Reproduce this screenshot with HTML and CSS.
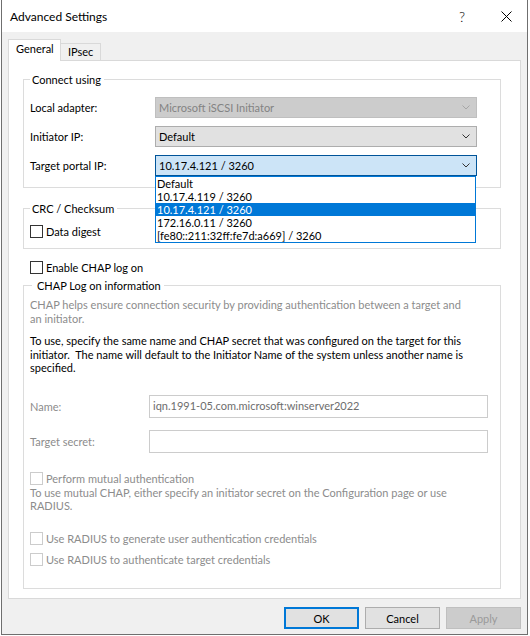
FILE: index.html
```html
<!DOCTYPE html>
<html lang="en">
<head>
<meta charset="utf-8">
<title>Advanced Settings</title>
<link rel="stylesheet" href="styles.css">
</head>
<body>
<div class="window">
  <div class="titlebar">
    <div class="title">Advanced Settings</div>
    <div class="caption-btn help">?</div>
    <div class="caption-btn close">
      <svg width="11" height="11" viewBox="0 0 11 11"><path d="M0.5 0.5L10.5 10.5M10.5 0.5L0.5 10.5" stroke="#000" stroke-width="1" fill="none"/></svg>
    </div>
  </div>
  <div class="client">
    <div class="tabs">
      <div class="tab active">General</div>
      <div class="tab">IPsec</div>
    </div>
    <div class="panel">
      <fieldset class="group">
        <legend>Connect using</legend>
        <div class="row">
          <span class="row-label">Local adapter:</span>
          <div class="combo disabled">
            <span class="combo-text">Microsoft iSCSI Initiator</span>
            <svg class="chev" width="8" height="5" viewBox="0 0 8 5"><path d="M0.5 0.5L4 4L7.5 0.5" fill="none" stroke="#a6a6a6" stroke-width="1"/></svg>
          </div>
        </div>
        <div class="row">
          <span class="row-label">Initiator IP:</span>
          <div class="combo">
            <span class="combo-text">Default</span>
            <svg class="chev" width="8" height="5" viewBox="0 0 8 5"><path d="M0.5 0.5L4 4L7.5 0.5" fill="none" stroke="#333" stroke-width="1"/></svg>
          </div>
        </div>
        <div class="row">
          <span class="row-label">Target portal IP:</span>
          <div class="combo focused">
            <span class="combo-text">10.17.4.121 / 3260</span>
            <svg class="chev" width="8" height="5" viewBox="0 0 8 5"><path d="M0.5 0.5L4 4L7.5 0.5" fill="none" stroke="#333" stroke-width="1"/></svg>
            <div class="dropdown">
              <div class="dropdown-item">Default</div>
              <div class="dropdown-item">10.17.4.119 / 3260</div>
              <div class="dropdown-item selected">10.17.4.121 / 3260</div>
              <div class="dropdown-item">172.16.0.11 / 3260</div>
              <div class="dropdown-item">[fe80::211:32ff:fe7d:a669] / 3260</div>
            </div>
          </div>
        </div>
      </fieldset>

      <fieldset class="group group-crc">
        <legend>CRC / Checksum</legend>
        <div class="check"><span class="box"></span><span>Data digest</span></div>
      </fieldset>

      <div class="check check-chap"><span class="box"></span><span>Enable CHAP log on</span></div>

      <fieldset class="group group-chap">
        <legend class="legend-chap">CHAP Log on information</legend>
        <p class="note muted">CHAP helps ensure connection security by providing authentication between a target and<br>an initiator.</p>
        <p class="note note-black">To use, specify the same name and CHAP secret that was configured on the target for this<br>initiator.&nbsp; The name will default to the Initiator Name of the system unless another name is<br>specified.</p>
        <div class="field field-name">
          <span class="field-label muted">Name:</span>
          <div class="textbox">iqn.1991-05.com.microsoft:winserver2022</div>
        </div>
        <div class="field field-secret">
          <span class="field-label muted">Target secret:</span>
          <div class="textbox"></div>
        </div>
        <div class="check disabled check-mutual"><span class="box"></span><span>Perform mutual authentication</span></div>
        <p class="note muted">To use mutual CHAP, either specify an initiator secret on the Configuration page or use<br>RADIUS.</p>
        <div class="check disabled check-radius1"><span class="box"></span><span>Use RADIUS to generate user authentication credentials</span></div>
        <div class="check disabled check-radius2"><span class="box"></span><span>Use RADIUS to authenticate target credentials</span></div>
      </fieldset>
    </div>
    <div class="buttons">
      <div class="btn default">OK</div>
      <div class="btn">Cancel</div>
      <div class="btn disabled">Apply</div>
    </div>
  </div>
</div>
</body>
</html>
```

FILE: styles.css
```css
* { box-sizing: border-box; }

html, body {
  margin: 0;
  padding: 0;
  background: #ffffff;
}

body {
  font-family: Lato, "Open Sans", "Liberation Sans", sans-serif;
  font-size: 11px;
  line-height: 15px;
  color: #000;
}

.window {
  margin-left: 1px;
  width: 527px;
  height: 635px;
  border: 1px solid #6f6f6f;
  border-top: none;
  background: #f0f0f0;
  display: flex;
  flex-direction: column;
}

.titlebar {
  height: 32px;
  flex: none;
  background: #ffffff;
  display: flex;
  align-items: center;
}

.title {
  flex: 1;
  padding-left: 8px;
  font-size: 12px;
}

.caption-btn {
  height: 32px;
  display: flex;
  align-items: center;
  justify-content: center;
}

.help {
  width: 46px;
  font-size: 14px;
  font-weight: 300;
}

.close {
  width: 42px;
}

.client {
  flex: 1;
  display: flex;
  flex-direction: column;
  padding: 7px 6px 0 6px;
}

.tabs {
  display: flex;
  align-items: flex-end;
  height: 21px;
  flex: none;
}

.tab {
  width: 41px;
  height: 17px;
  margin-left: -1px;
  border: 1px solid #d9d9d9;
  border-bottom: none;
  background: #f0f0f0;
  padding-left: 7px;
  line-height: 15px;
  white-space: nowrap;
}

.tab.active {
  position: relative;
  z-index: 2;
  width: 53px;
  height: 22px;
  margin-left: 0;
  margin-bottom: -1px;
  background: #ffffff;
  line-height: 18px;
}

.panel {
  flex: none;
  height: 539px;
  background: #ffffff;
  border: 1px solid #d9d9d9;
  padding: 11px 0 0 14px;
}

.group {
  margin: 0;
  min-width: 0;
  width: 478px;
  border: 1px solid #dcdcdc;
  padding: 10px 0 11px 6px;
}

.group legend {
  margin: 0;
  padding: 0 3px 0 2px;
  line-height: 15px;
}

.group .legend-chap {
  margin-left: 2px;
  padding-left: 5px;
}

.row {
  display: flex;
  align-items: center;
  height: 21px;
}

.row + .row {
  margin-top: 8px;
}

.row-label {
  width: 125px;
  flex: none;
}

.combo {
  position: relative;
  width: 322px;
  height: 21px;
  border: 1px solid #adadad;
  background: #e1e1e1;
  display: flex;
  align-items: center;
  padding: 0 6px 0 3px;
}

.combo.disabled {
  background: #cccccc;
  border-color: #bfbfbf;
  color: #838383;
}

.combo.focused {
  background: #cce4f7;
  border-color: #005499;
}

.combo-text {
  flex: 1;
  white-space: nowrap;
}

.chev {
  flex: none;
  display: block;
}

.dropdown {
  position: absolute;
  left: -1px;
  top: 20px;
  width: 321px;
  border: 1px solid #0078d7;
  background: #ffffff;
  z-index: 5;
}

.dropdown-item {
  height: 13px;
  line-height: 13px;
  padding-left: 1px;
  white-space: nowrap;
}

.dropdown-item.selected {
  background: #0078d7;
  color: #ffffff;
}

.check {
  display: flex;
  align-items: center;
  height: 15px;
  white-space: nowrap;
}

.box {
  flex: none;
  width: 13px;
  height: 13px;
  border: 1px solid #333333;
  background: #ffffff;
  margin-right: 3px;
}

.check.disabled {
  color: #8c8c8c;
}

.check.disabled .box {
  border-color: #cccccc;
}

.group-crc {
  margin-top: 13px;
  padding-top: 8px;
  padding-bottom: 9px;
}

.check-chap {
  margin: 11px 0 0 7px;
}

.group-chap {
  margin-top: 3px;
  padding-top: 5px;
  padding-bottom: 21px;
}

.note {
  margin: 0;
  line-height: 13.5px;
  white-space: nowrap;
}

.muted {
  color: #8c8c8c;
}

.note-black {
  margin-top: 9px;
}

.field {
  display: flex;
  align-items: center;
  height: 23px;
}

.field-label {
  width: 119px;
  flex: none;
}

.textbox {
  width: 339px;
  height: 23px;
  border: 1px solid #cccccc;
  background: #ffffff;
  padding: 2px 3px 0;
  line-height: 15px;
  color: #6d6d6d;
  white-space: nowrap;
}

.field-name {
  margin-top: 20px;
}

.field-secret {
  margin-top: 12px;
}

.check-mutual {
  margin-top: 18px;
}

.check-radius1 {
  margin-top: 18px;
}

.check-radius2 {
  margin-top: 6px;
}

.buttons {
  display: flex;
  justify-content: flex-end;
  gap: 6px;
  margin-top: 8px;
}

.btn {
  width: 75px;
  height: 22px;
  border: 1px solid #adadad;
  background: #e1e1e1;
  display: flex;
  align-items: center;
  justify-content: center;
}

.btn.default {
  border: 2px solid #0078d7;
}

.btn.disabled {
  background: #cccccc;
  border-color: #bfbfbf;
  color: #9a9a9a;
}
```
